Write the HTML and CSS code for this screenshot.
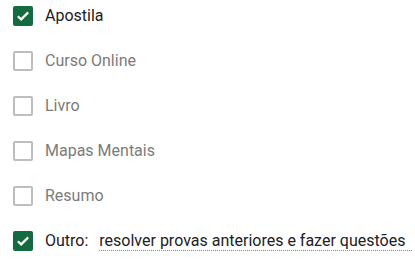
FILE: index.html
```html
<!DOCTYPE html>
<html lang="pt">
<head>
<meta charset="utf-8">
<link rel="stylesheet" href="styles.css">
</head>
<body>
<div class="options">
  <div class="row">
    <span class="box checked"><svg viewBox="0 0 20 20" width="20" height="20"><path d="M4.8 10.2 L8.2 13.4 L15.2 6.4" fill="none" stroke="#fff" stroke-width="2.2"/></svg></span>
    <span class="label on">Apostila</span>
  </div>
  <div class="row">
    <span class="box"></span>
    <span class="label">Curso Online</span>
  </div>
  <div class="row">
    <span class="box"></span>
    <span class="label">Livro</span>
  </div>
  <div class="row">
    <span class="box"></span>
    <span class="label">Mapas Mentais</span>
  </div>
  <div class="row">
    <span class="box"></span>
    <span class="label">Resumo</span>
  </div>
  <div class="row">
    <span class="box checked"><svg viewBox="0 0 20 20" width="20" height="20"><path d="M4.8 10.2 L8.2 13.4 L15.2 6.4" fill="none" stroke="#fff" stroke-width="2.2"/></svg></span>
    <span class="label on">Outro:</span>
    <span class="other">resolver provas anteriores e fazer questões</span>
  </div>
</div>
</body>
</html>
```
FILE: styles.css
```css
html, body {
  margin: 0;
  padding: 0;
  background: #fff;
}
body {
  font-family: Roboto, "Liberation Sans", sans-serif;
  font-size: 16px;
}
.options {
  display: flex;
  flex-direction: column;
  gap: 25px;
  padding: 6px 3px 0 13px;
}
.row {
  display: flex;
  align-items: center;
  height: 20px;
}
.box {
  box-sizing: border-box;
  width: 20px;
  height: 20px;
  border: 2px solid #bdbdbd;
  border-radius: 2px;
  flex: none;
  margin-right: 12px;
}
.box.checked {
  border: none;
  background: #136b3f;
}
.box svg {
  display: block;
}
.label {
  color: #7b7b7b;
  line-height: 20px;
}
.label.on {
  color: #202124;
}
.other {
  flex: 1;
  margin-left: 11px;
  color: #202124;
  line-height: 19px;
  border-bottom: 1px dotted #8a8a8a;
  white-space: nowrap;
}
```
